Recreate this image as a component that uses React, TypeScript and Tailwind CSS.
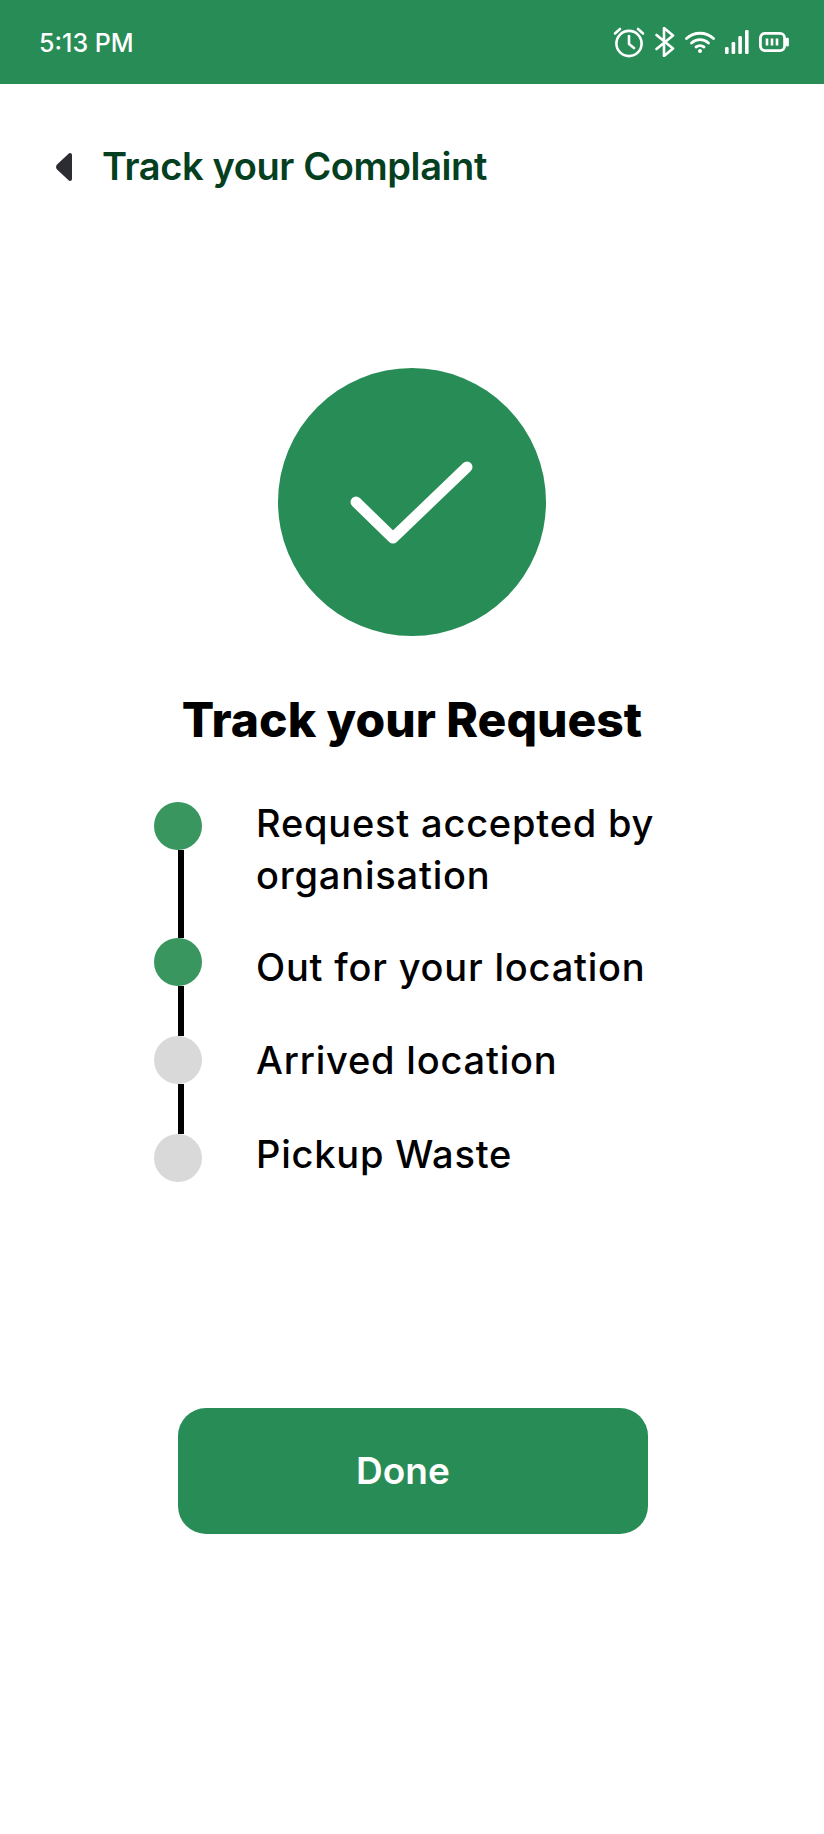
const steps = [
  { label: "Request accepted by organisation", done: true, connector: "h-[88px]", height: "h-[136px]", textOffset: "-mt-[5px]" },
  { label: "Out for your location", done: true, connector: "h-[50px]", height: "h-[98px]", textOffset: "mt-[3px]" },
  { label: "Arrived location", done: false, connector: "h-[50px]", height: "h-[98px]", textOffset: "-mt-[2px]" },
  { label: "Pickup Waste", done: false, connector: "", height: "h-[48px]", textOffset: "-mt-[6px]" },
];

function AlarmIcon() {
  return (
    <svg width="32" height="32" viewBox="0 0 32 32" fill="none" stroke="white" strokeWidth="2.6" strokeLinecap="round" strokeLinejoin="round">
      <circle cx="16" cy="17.5" r="12.6" />
      <path d="M16 10v8l5 4" />
      <path d="M2 7.5 7 3M30 7.5 25 3" />
    </svg>
  );
}

function BluetoothIcon() {
  return (
    <svg width="20" height="30" viewBox="0 0 20 30" fill="none" stroke="white" strokeWidth="2.6" strokeLinejoin="round" strokeLinecap="round">
      <path d="M1.5 8 18 21.5 9 29V1l9 7.5L1.5 22" />
    </svg>
  );
}

function WifiIcon() {
  return (
    <svg width="30" height="22" viewBox="0 0 30 22" fill="none" stroke="white" strokeWidth="2.8" strokeLinecap="round">
      <path d="M1.5 7.5C9 .5 21 .5 28.500 7.500" />
      <path d="M6.500 12C11.500 7.500 18.500 7.500 23.500 12" />
      <path d="M11 16c2.500-1.800 5.500-1.800 8 0" />
      <circle cx="15" cy="20" r="2" fill="white" stroke="none" />
    </svg>
  );
}

function SignalIcon() {
  return (
    <svg width="24" height="24" viewBox="0 0 24 24" fill="white">
      <rect x="0" y="17" width="3.600" height="7" rx="1.200" />
      <rect x="6.600" y="12" width="3.600" height="12" rx="1.200" />
      <rect x="13.300" y="6" width="3.600" height="18" rx="1.200" />
      <rect x="20" y="0" width="3.600" height="24" rx="1.200" />
    </svg>
  );
}

function BatteryIcon() {
  return (
    <svg width="30" height="20" viewBox="0 0 30 20" fill="none" stroke="white">
      <rect x="1.400" y="1.400" width="24.200" height="17.200" rx="4.500" strokeWidth="2.800" />
      <path d="M8 6.500v7M13 6.500v7M18 6.500v7" strokeWidth="2.600" />
      <path d="M28.400 7v6" strokeWidth="3" strokeLinecap="round" />
    </svg>
  );
}

export default function App() {
  return (
    <div className="flex h-[1834px] w-[824px] flex-col overflow-hidden bg-white font-['Inter',sans-serif]">
      <div className="flex h-[84px] shrink-0 items-center justify-between bg-[#288c56] pl-[39px] pr-[35px] text-white">
        <span className="pt-[3px] text-[25px] font-medium">5:13 PM</span>
        <div className="flex items-center gap-[10px]">
          <AlarmIcon />
          <BluetoothIcon />
          <WifiIcon />
          <SignalIcon />
          <BatteryIcon />
        </div>
      </div>

      <div className="flex h-[166px] shrink-0 items-center pl-[56px]">
        <svg width="16" height="28" viewBox="0 0 16 28" fill="#2b2d33">
          <path d="M14 0a2 2 0 0 1 2 2v24a2 2 0 0 1-2 2c-.7 0-1.200-.3-1.700-.9L1 16.400c-1.300-1.500-1.300-3.300 0-4.800L12.300.9C12.800.3 13.300 0 14 0Z" />
        </svg>
        <h1 className="ml-[30px] -mt-[2px] text-[38px] font-semibold tracking-[-0.4px] text-[#04401f]">Track your Complaint</h1>
      </div>

      <div className="mt-[118px] flex shrink-0 justify-center">
        <div className="h-[268px] w-[268px] rounded-full bg-[#288c56]">
          <svg width="268" height="268" viewBox="0 0 268 268" fill="none" stroke="white" strokeWidth="11" strokeLinecap="round" strokeLinejoin="round">
            <path d="M78 134 115 170 189 99" />
          </svg>
        </div>
      </div>

      <h2 className="mt-[54px] shrink-0 text-center text-[48px] leading-[60px] font-extrabold text-black">Track your Request</h2>

      <div className="mt-[52px] ml-[154px] flex shrink-0 flex-col">
        {steps.map((step) => (
          <div key={step.label} className={`flex ${step.height}`}>
            <div className="flex w-[48px] shrink-0 flex-col">
              <div className={`h-[48px] w-[48px] rounded-full ${step.done ? "bg-[#39965f]" : "bg-[#d9d9d9]"}`} />
              {step.connector && <div className={`ml-[24px] w-[6px] bg-black ${step.connector}`} />}
            </div>
            <p className={`ml-[54px] w-[440px] text-[38px] leading-[52px] font-[450] tracking-[0.8px] text-black ${step.textOffset}`}>{step.label}</p>
          </div>
        ))}
      </div>

      <button className="mt-[226px] ml-[178px] flex h-[126px] w-[470px] shrink-0 items-center justify-center rounded-[28px] bg-[#288c56] pr-[20px] text-[37px] font-semibold text-white">
        Done
      </button>
    </div>
  );
}
